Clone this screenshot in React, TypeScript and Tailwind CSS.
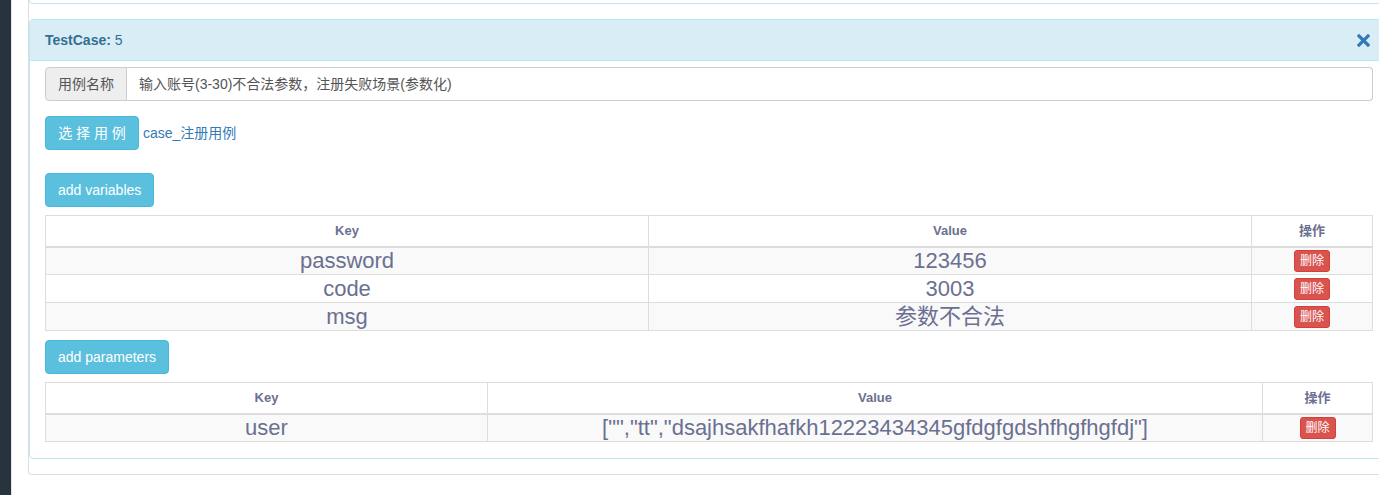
import React from "react";

const FONT = { fontFamily: '"Liberation Sans", Arial, "Noto Sans CJK SC", sans-serif' };

type Row = { key: string; value: string };

const variables: Row[] = [
  { key: "password", value: "123456" },
  { key: "code", value: "3003" },
  { key: "msg", value: "参数不合法" },
];

const parameters: Row[] = [
  { key: "user", value: '["","tt","dsajhsakfhafkh12223434345gfdgfgdshfhgfhgfdj"]' },
];

function DeleteButton() {
  return (
    <button className="h-[22px] w-[36px] rounded-[3px] border border-[#d43f3a] bg-[#d9534f] text-[12px] leading-[20px] text-white">
      删除
    </button>
  );
}

function KvTable({ rows, widths }: { rows: Row[]; widths: [string, string, string] }) {
  return (
    <table className="w-full table-fixed border-collapse border border-[#ddd]">
      <colgroup>
        <col className={widths[0]} />
        <col className={widths[1]} />
        <col className={widths[2]} />
      </colgroup>
      <thead>
        <tr className="h-[31px]">
          <th className="border border-b-2 border-[#ddd] text-center text-[13px] font-bold text-[#6b7091]">Key</th>
          <th className="border border-b-2 border-[#ddd] text-center text-[13px] font-bold text-[#6b7091]">Value</th>
          <th className="border border-b-2 border-[#ddd] text-center text-[13px] font-bold text-[#6b7091]">操作</th>
        </tr>
      </thead>
      <tbody>
        {rows.map((r, i) => (
          <tr key={r.key} className={i % 2 === 0 ? "h-[28px] bg-[#f9f9f9]" : "h-[28px] bg-white"}>
            <td className="border border-[#ddd] p-0 text-center text-[22px] leading-[24px] text-[#6b7091]">{r.key}</td>
            <td className="border border-[#ddd] p-0 text-center text-[22px] leading-[24px] text-[#6b7091]">{r.value}</td>
            <td className="border border-[#ddd] p-0 text-center align-middle">
              <div className="flex justify-center">
                <DeleteButton />
              </div>
            </td>
          </tr>
        ))}
      </tbody>
    </table>
  );
}

export default function App() {
  return (
    <div className="flex h-[495px] w-[1379px] overflow-hidden bg-white" style={FONT}>
      {/* dark side rail */}
      <div className="h-full w-[12px] shrink-0 border-r border-[#dfe9df] bg-[#27333e]" />

      <div className="pl-[16px]">
        {/* outer panel */}
        <div className="w-[1362px] rounded-b-[4px] border border-t-0 border-[#ddd] pb-[15px]">
          {/* tail of previous case panel */}
          <div className="h-[4px] rounded-b-[4px] border border-t-0 border-[#bce8f1]" />

          {/* TestCase panel */}
          <div className="mt-[15px] rounded-[4px] border border-[#bce8f1]">
            <div className="flex h-[41px] items-center justify-between border-b border-[#bce8f1] bg-[#d9edf7] pl-[15px] pr-[18px] text-[14px] text-[#31708f]">
              <div>
                <span className="font-bold">TestCase:</span> 5
              </div>
              <svg width="13" height="13" viewBox="0 0 13 13">
                <path d="M2 2 L11 11 M11 2 L2 11" stroke="#337ab7" strokeWidth="3.2" strokeLinecap="square" />
              </svg>
            </div>

            <div className="pb-[16px] pl-[15px] pr-[15px] pt-[6px]">
              {/* case name */}
              <div className="flex h-[34px] text-[14px] text-[#555]">
                <div className="flex w-[82px] items-center justify-center rounded-l-[4px] border border-[#ccc] bg-[#eee]">
                  用例名称
                </div>
                <div className="flex flex-1 items-center rounded-r-[4px] border border-l-0 border-[#ccc] px-[12px]">
                  输入账号(3-30)不合法参数，注册失败场景(参数化)
                </div>
              </div>

              {/* choose case */}
              <div className="mt-[15px] flex items-center gap-[4px]">
                <button className="h-[34px] w-[94px] rounded-[4px] border border-[#46b8da] bg-[#5bc0de] text-[14px] text-white">
                  选 择 用 例
                </button>
                <a className="text-[14px] text-[#337ab7]">case_注册用例</a>
              </div>

              <button className="mt-[23px] block h-[34px] rounded-[4px] border border-[#46b8da] bg-[#5bc0de] px-[12px] text-[14px] text-white">
                add variables
              </button>

              <div className="mt-[8px]">
                <KvTable rows={variables} widths={["w-[603px]", "w-[603px]", "w-[121px]"]} />
              </div>

              <button className="mt-[9px] block h-[34px] rounded-[4px] border border-[#46b8da] bg-[#5bc0de] px-[12px] text-[14px] text-white">
                add parameters
              </button>

              <div className="mt-[8px]">
                <KvTable rows={parameters} widths={["w-[442px]", "w-[775px]", "w-[110px]"]} />
              </div>
            </div>
          </div>
        </div>
      </div>
    </div>
  );
}
